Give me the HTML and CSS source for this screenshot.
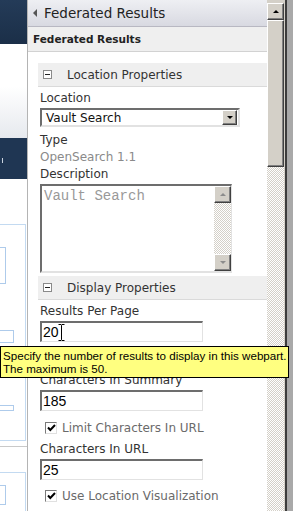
FILE: index.html
```html
<!DOCTYPE html>
<html lang="en">
<head>
    <meta charset="UTF-8">
    <meta name="viewport" content="width=device-width, initial-scale=1.0">
    <title>Federated Results</title>
    <link rel="stylesheet" href="styles.css">
</head>
<body>
<div class="page">
    <!-- page behind the tool pane -->
    <div class="site">
        <div class="site-banner"></div>
        <div class="site-fade"></div>
        <div class="site-nav"><span class="site-nav-mark"></span></div>
        <div class="site-box">
            <div class="site-inner inner-a"></div>
            <div class="site-inner inner-b"></div>
            <div class="site-inner inner-c"></div>
        </div>
        <div class="site-rule"></div>
        <div class="site-box site-box-last">
            <div class="site-inner inner-d"></div>
        </div>
    </div>

    <!-- tool pane -->
    <div class="pane">
        <div class="pane-title"><span class="back-arrow"></span>Federated Results</div>
        <div class="pane-sub">Federated Results</div>
        <div class="pane-body">
            <div class="section">
                <div class="section-head"><span class="toggle"></span>Location Properties</div>
                <div class="section-body">
                    <div class="label first">Location</div>
                    <div class="select">
                        <span>Vault Search</span>
                        <span class="select-btn"><span class="tri-down"></span></span>
                    </div>
                    <div class="label meta">Type</div>
                    <div class="label value">OpenSearch 1.1</div>
                    <div class="label value-label">Description</div>
                    <div class="textarea">
                        <div class="textarea-text">Vault Search</div>
                        <div class="mini-scroll">
                            <span class="mini-btn"><span class="tri-up gray"></span></span>
                            <span class="mini-track"></span>
                            <span class="mini-btn"><span class="tri-down gray"></span></span>
                        </div>
                    </div>
                </div>
            </div>

            <div class="section">
                <div class="section-head"><span class="toggle"></span>Display Properties</div>
                <div class="section-body">
                    <div class="label first">Results Per Page</div>
                    <div class="text-box">20<span class="ibeam">
                        <svg width="7" height="17" viewBox="0 0 7 17">
                            <path d="M0.5 0.5h2.5l0.5 1 0.5-1h2.5M3.5 1.5v14M0.5 16.5h2.5l0.5-1 0.5 1h2.5" fill="none" stroke="#fff" stroke-width="2.2"/>
                            <path d="M0.5 0.5h2.5l0.5 1 0.5-1h2.5M3.5 1.5v14M0.5 16.5h2.5l0.5-1 0.5 1h2.5" fill="none" stroke="#000" stroke-width="1"/>
                        </svg>
                    </span></div>

                    <div class="label spaced">Characters In Summary</div>
                    <div class="text-box">185</div>
                    <div class="check-row">
                        <span class="check"><svg width="9" height="8" viewBox="0 0 9 8"><path d="M1 3.5l2.3 2.5L8 1" fill="none" stroke="#000" stroke-width="2"/></svg></span>
                        Limit Characters In URL
                    </div>

                    <div class="label after-check">Characters In URL</div>
                    <div class="text-box">25</div>
                    <div class="check-row">
                        <span class="check"><svg width="9" height="8" viewBox="0 0 9 8"><path d="M1 3.5l2.3 2.5L8 1" fill="none" stroke="#000" stroke-width="2"/></svg></span>
                        Use Location Visualization
                    </div>
                </div>
            </div>
        </div>
    </div>

    <div class="scrollbar">
        <span class="scroll-btn"><span class="tri-up"></span></span>
        <span class="scroll-thumb"></span>
        <span class="scroll-track"></span>
    </div>
    <div class="frame-edge"></div>

    <div class="tooltip">Specify the number of results to display in this webpart.<br>The maximum is 50.</div>
</div>
</body>
</html>
```

FILE: styles.css
```css
/* base */
body {
    margin: 0;
    font-family: "DejaVu Sans", Verdana, sans-serif;
    font-size: 12px;
    color: #333;
}
.page {
    position: relative;
    display: flex;
    width: 293px;
    height: 511px;
    overflow: hidden;
    background: #fff;
}

/* site behind the pane */
.site {
    width: 27px;
    flex-shrink: 0;
    border-right: 1px solid #b4b4b4;
    display: flex;
    flex-direction: column;
}
.site-banner {
    height: 46px;
    background: linear-gradient(#243b58, #1b2f48);
}
.site-fade {
    height: 97px;
    background: linear-gradient(#fff 0, #fff 45%, #e6e9ee 100%);
}
.site-nav {
    height: 43px;
    background: #1f3653;
    overflow: hidden;
}
.site-nav-mark {
    display: block;
    width: 2px;
    height: 5px;
    margin-top: 20px;
    border-right: 1px solid #c9d3df;
}
.site-box {
    box-sizing: border-box;
    width: 26px;
    height: 225px;
    margin-top: 45px;
    border: 1px solid #c3daf1;
    border-left: none;
}
.site-box-last {
    height: 40px;
    margin-top: 25px;
    border-bottom: none;
}
.site-inner {
    box-sizing: border-box;
    border: 1px solid #aecbeb;
    border-left: none;
}
.inner-a { width: 6px; height: 37px; margin-top: 22px; }
.inner-b { width: 14px; height: 13px; margin-top: 46px; }
.inner-c { width: 14px; height: 6px; margin-top: 62px; }
.inner-d { width: 6px; height: 20px; margin-top: 12px; }
.site-rule {
    height: 1px;
    margin-top: 5px;
    background: #c9c9c9;
}

/* tool pane */
.pane {
    width: 239px;
    flex-shrink: 0;
    display: flex;
    flex-direction: column;
}
.pane-title {
    box-sizing: border-box;
    height: 27px;
    padding-left: 5px;
    display: flex;
    align-items: center;
    background: linear-gradient(#eeeff3, #d8d9e1);
    border-bottom: 1px solid #b8b8c2;
    font-size: 13.5px;
    color: #222;
}
.back-arrow {
    width: 0;
    height: 0;
    margin-right: 7px;
    border-top: 4px solid transparent;
    border-bottom: 4px solid transparent;
    border-right: 4px solid #555;
}
.pane-sub {
    box-sizing: border-box;
    height: 25px;
    padding-left: 5px;
    line-height: 24px;
    background: #efefef;
    border-bottom: 1px solid #d2d2d2;
    font-size: 10.5px;
    font-weight: bold;
    color: #222;
}
.pane-body {
    padding: 11px 0 0 10px;
}

/* sections */
.section-head {
    box-sizing: border-box;
    height: 24px;
    padding-left: 5px;
    display: flex;
    align-items: center;
    background: #efefef;
    border-bottom: 1px solid #dadada;
    color: #333;
}
.section + .section .section-head {
    margin-top: 3px;
}
.toggle {
    position: relative;
    box-sizing: border-box;
    width: 9px;
    height: 9px;
    margin-right: 15px;
    border: 1px solid #8a8a8a;
    background: #fff;
}
.toggle::after {
    content: "";
    position: absolute;
    left: 1px;
    top: 3px;
    width: 5px;
    height: 1px;
    background: #222;
}
.section-body {
    padding-left: 2px;
}
.label {
    line-height: 16px;
    margin-bottom: 2px;
}
.label.first { margin-top: 3px; }
.label.meta { margin-top: 5px; margin-bottom: 1px; }
.label.value { color: #8a8a8a; margin-bottom: 1px; }
.label.spaced { margin-top: 30px; }
.label.after-check { margin-top: 5px; }

/* controls */
.select {
    box-sizing: border-box;
    width: 200px;
    height: 19px;
    padding-left: 4px;
    display: flex;
    align-items: center;
    justify-content: space-between;
    border: 2px solid;
    border-color: #6d6d6d #e2e2e2 #e2e2e2 #6d6d6d;
    color: #111;
}
.select-btn, .mini-btn, .scroll-btn {
    box-sizing: border-box;
    display: flex;
    align-items: center;
    justify-content: center;
    background: #d4d0c8;
    border: 1px solid;
    border-color: #fff #404040 #404040 #fff;
    box-shadow: inset -1px -1px 0 #808080;
}
.select-btn {
    width: 15px;
    height: 15px;
    margin-right: 1px;
}
.tri-down, .tri-up {
    width: 0;
    height: 0;
    border-left: 3px solid transparent;
    border-right: 3px solid transparent;
}
.tri-down { border-top: 3px solid #000; }
.tri-up { border-bottom: 3px solid #000; }
.tri-down.gray { border-top-color: #8c8c8c; }
.tri-up.gray { border-bottom-color: #8c8c8c; }

.textarea {
    box-sizing: border-box;
    width: 192px;
    height: 89px;
    display: flex;
    border: 2px solid;
    border-color: #6d6d6d #e2e2e2 #e2e2e2 #6d6d6d;
    border-right-width: 1px;
}
.textarea-text {
    flex: 1;
    padding: 2px 0 0 2px;
    font-family: "Liberation Mono", "Courier New", monospace;
    font-size: 14px;
    line-height: 16px;
    color: #999;
}
.mini-scroll {
    width: 17px;
    display: flex;
    flex-direction: column;
}
.mini-btn {
    height: 17px;
}
.mini-track, .scroll-track {
    flex: 1;
    background: repeating-conic-gradient(#d4d0c8 0 25%, #fff 0 50%) 0 0 / 2px 2px;
}

.text-box {
    box-sizing: border-box;
    width: 163px;
    height: 21px;
    padding-left: 1px;
    display: flex;
    align-items: center;
    border: 2px solid;
    border-color: #6d6d6d #e2e2e2 #e2e2e2 #6d6d6d;
    border-right-width: 1px;
    border-bottom-width: 1px;
    font-family: "Liberation Sans", Arial, sans-serif;
    font-size: 14px;
    color: #000;
}
.ibeam {
    display: flex;
    margin-left: -1px;
}

.check-row {
    height: 16px;
    margin-top: 9px;
    padding-left: 5px;
    display: flex;
    align-items: center;
    color: #6a6a6a;
}
.check-row + .label { margin-top: 5px; }
.text-box + .check-row:last-child { margin-top: 8px; }
.check {
    box-sizing: border-box;
    width: 12px;
    height: 12px;
    margin-right: 5px;
    display: flex;
    align-items: center;
    justify-content: center;
    background: #fff;
    border: 1px solid;
    border-color: #7a7a7a #e0e0e0 #e0e0e0 #7a7a7a;
}

/* main scrollbar */
.scrollbar {
    width: 17px;
    flex-shrink: 0;
    padding-top: 3px;
    display: flex;
    flex-direction: column;
    background: #d4d0c8;
}
.scroll-btn {
    height: 17px;
}
.scroll-thumb {
    height: 147px;
    box-sizing: border-box;
    background: #d4d0c8;
    border: 1px solid;
    border-color: #fff #404040 #404040 #fff;
    box-shadow: inset -1px -1px 0 #808080;
}
.frame-edge {
    flex: 1;
    background: linear-gradient(to right, #d4d0c8 0 1px, #3c3c3c 1px 3px, #a9a9a9 3px);
}

/* tooltip over the form */
.tooltip {
    position: absolute;
    left: 0;
    top: 346px;
    box-sizing: border-box;
    width: 289px;
    height: 32px;
    padding: 2px 0 0 2px;
    background: #ffff80;
    border: 1px solid #000;
    font-family: "Liberation Sans", Arial, sans-serif;
    font-size: 11.6px;
    line-height: 13px;
    color: #000;
    white-space: nowrap;
}
```
